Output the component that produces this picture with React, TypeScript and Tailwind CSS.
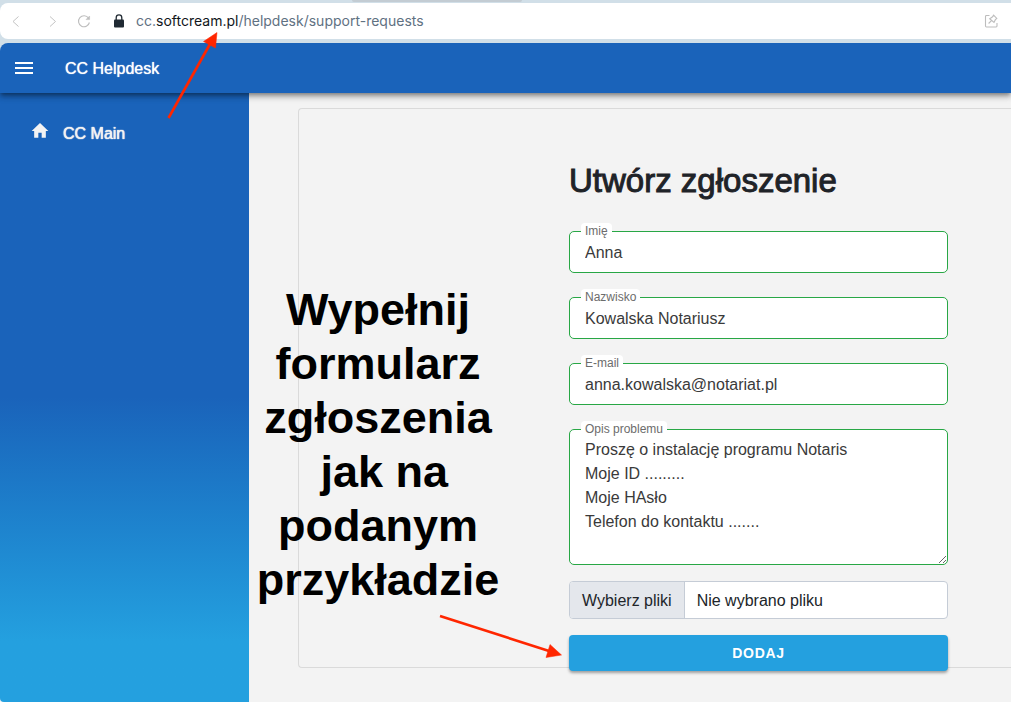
import type { InputHTMLAttributes } from "react";

const BrowserBar = () => {
  return (
    <div className="relative z-20 bg-[#d1dfe8] pt-[3px] pb-1">
      <div className="absolute top-0 left-[352px] h-[2px] w-[170px] rounded-b bg-[#c3ccd3]" />
      <div className="flex h-9 items-center rounded-l-lg bg-white pr-3 pl-2">
        <button type="button" aria-label="Back" className="mr-4 text-[#c4c4c4]">
          <svg width="16" height="16" viewBox="0 0 16 16" fill="none" stroke="currentColor" strokeWidth="1">
            <path d="M10.5 3.5 5 8.5l5.5 5" />
          </svg>
        </button>
        <button type="button" aria-label="Forward" className="mr-4 ml-1 text-[#c4c4c4]">
          <svg width="16" height="16" viewBox="0 0 16 16" fill="none" stroke="currentColor" strokeWidth="1">
            <path d="M6 3.5 11.5 8.5 6 13.5" />
          </svg>
        </button>
        <button type="button" aria-label="Reload" className="text-[#bdbdbd]">
          <svg width="16" height="16" viewBox="0 0 16 16" fill="none" stroke="currentColor" strokeWidth="1.1">
            <path d="M12.500 5A5.500 5.500 0 1 0 13.400 9.500" />
            <path d="M13.600 3v3.600H10z" fill="currentColor" strokeWidth="0.5" />
          </svg>
        </button>
        <svg className="ml-5" width="14" height="16" viewBox="0 0 14 16">
          <rect x="2" y="6.5" width="10" height="8" rx="1" fill="#202a33" />
          <path d="M4.200 7V4.700a2.800 2.800 0 0 1 5.600 0V7" fill="none" stroke="#202a33" strokeWidth="1.3" />
        </svg>
        <div className="ml-[10px] flex-1 font-['Inter',sans-serif] text-sm text-[#5f7182]">
          cc.<span className="text-[#11161b]">softcream.pl</span>/helpdesk/support-requests
        </div>
        <button type="button" aria-label="Pin" className="text-[#bdbdbd]">
          <svg width="16" height="16" viewBox="0 0 16 16" fill="none" stroke="currentColor" strokeWidth="1.1">
            <path d="M6.500 2.500H3.400a.9.9 0 0 0-.9.9v9.700c0 .5.4.9.9.9h9.700c.5 0 .9-.4.9-.9V10" />
            <path d="M10.600 2.200 13.800 5.400 12.400 6.700 11 9.300 6.700 5.700 9.300 4zM8.500 7.600 5.600 10.500" />
          </svg>
        </button>
      </div>
    </div>
  );
};

const Header = () => {
  return (
    <header className="relative z-10 bg-[#d1dfe8] shadow-[0_2px_4px_-1px_rgba(0,0,0,0.3),0_4px_5px_rgba(0,0,0,0.2),0_1px_10px_rgba(0,0,0,0.2)]">
      <div className="flex h-[50px] items-center rounded-tl-lg bg-[#1a63ba] px-3 text-white">
        <button type="button" aria-label="Menu">
          <svg width="24" height="24" viewBox="0 0 24 24" fill="currentColor">
            <path d="M3 18h18v-2H3v2zm0-5h18v-2H3v2zm0-7v2h18V6H3z" />
          </svg>
        </button>
        <div className="ml-[29px] pt-[2px] text-base [text-shadow:0_0_1px_currentColor]">CC Helpdesk</div>
      </div>
    </header>
  );
};

const Sidebar = () => {
  return (
    <nav className="w-[249px] shrink-0 rounded-bl bg-linear-to-b from-[#1a63ba] from-50% to-[#24a0df] to-90% pt-[29px]">
      <a href="#main" className="flex items-center pl-[30px] text-[#f3f3f3]">
        <svg className="-mt-[6px]" width="20" height="20" viewBox="0 0 24 24" fill="currentColor">
          <path d="M10 20v-6h4v6h5v-8h3L12 2.500 2 12h3v8z" />
        </svg>
        <span className="ml-[13px] text-base [text-shadow:0_0_1px_currentColor,0_0_1px_currentColor]">CC Main</span>
      </a>
    </nav>
  );
};

const labelStyle = "absolute -top-2 left-3 rounded-t bg-white px-1 text-xs leading-4 text-[#6c6c6c]";
const controlStyle = "block w-full rounded-[5px] border border-[#28a745] bg-white px-[15px] text-base text-[#3a3a3a] outline-none";

interface FieldProps extends InputHTMLAttributes<HTMLInputElement> {
  id: string;
  label: string;
}

const Field = ({ id, label, ...props }: FieldProps) => {
  return (
    <div className="relative">
      <input id={id} className={`${controlStyle} h-[42px] pt-[2px]`} {...props} />
      <label htmlFor={id} className={labelStyle}>{label}</label>
    </div>
  );
};

const description = `Proszę o instalację programu Notaris
Moje ID .........
Moje HAsło
Telefon do kontaktu .......`;

const RequestForm = () => {
  return (
    <form className="-mb-1" onSubmit={(e) => e.preventDefault()}>
      <h1 className="text-[33px] leading-10 text-[#1f2328] [-webkit-text-stroke:1px_#1f2328]">Utwórz zgłoszenie</h1>
      <div className="mt-[30px] flex flex-col gap-6">
        <Field id="first-name" label="Imię" defaultValue="Anna" />
        <Field id="last-name" label="Nazwisko" defaultValue="Kowalska Notariusz" />
        <Field id="email" label="E-mail" type="email" defaultValue="anna.kowalska@notariat.pl" />
        <div className="relative">
          <textarea
            id="description"
            className={`${controlStyle} h-[136px] resize-y py-2 leading-6`}
            defaultValue={description}
            spellCheck={false}
          />
          <label htmlFor="description" className={labelStyle}>Opis problemu</label>
        </div>
      </div>
      <label
        htmlFor="files"
        className="mt-4 flex h-[38px] cursor-pointer overflow-hidden rounded border border-[#c5ccd6] bg-white text-base text-[#212529]"
      >
        <span className="flex items-center border-r border-[#c5ccd6] bg-[#e4e7ec] px-3 pt-[2px]">Wybierz pliki</span>
        <span className="flex items-center px-3 pt-[2px]">Nie wybrano pliku</span>
        <input id="files" type="file" multiple className="sr-only" />
      </label>
      <button
        type="submit"
        className="mt-4 h-9 w-full rounded bg-[#24a0df] text-sm font-bold tracking-wider text-white shadow-[0_2px_3px_rgba(0,0,0,0.35)]"
      >
        DODAJ
      </button>
    </form>
  );
};

const Annotations = () => {
  return (
    <div className="pointer-events-none absolute inset-0 z-30">
      <p className="absolute top-[283px] left-[248px] w-[260px] text-center text-[45px] leading-[54px] font-bold text-black">
        Wypełnij formularz zgłoszenia &nbsp;jak na podanym przykładzie
      </p>
      <svg className="absolute top-0 left-0" width="600" height="702" viewBox="0 0 600 702" fill="#ff2600" stroke="#ff2600">
        <line x1="168.5" y1="118" x2="210" y2="44" strokeWidth="2.6" />
        <path d="M217 32.500 203.500 41.500 215.500 48z" strokeWidth="0.5" />
        <line x1="440" y1="616" x2="549" y2="651" strokeWidth="2.6" />
        <path d="M561.500 655 550 644.500 546 657.500z" strokeWidth="0.5" />
      </svg>
    </div>
  );
};

const App = () => {
  return (
    <div className="relative flex min-h-screen flex-col overflow-hidden bg-[#f3f3f3] font-['Liberation_Sans',Arial,sans-serif]">
      <BrowserBar />
      <Header />
      <div className="flex flex-1">
        <Sidebar />
        <main className="flex flex-1 flex-col pt-[15px] pb-[34px] pl-[49px]">
          <div className="flex-1 rounded-l border border-r-0 border-[#dadada] pt-[52px] pr-[63px] pl-[270px]">
            <RequestForm />
          </div>
        </main>
      </div>
      <Annotations />
    </div>
  );
};

export default App;
